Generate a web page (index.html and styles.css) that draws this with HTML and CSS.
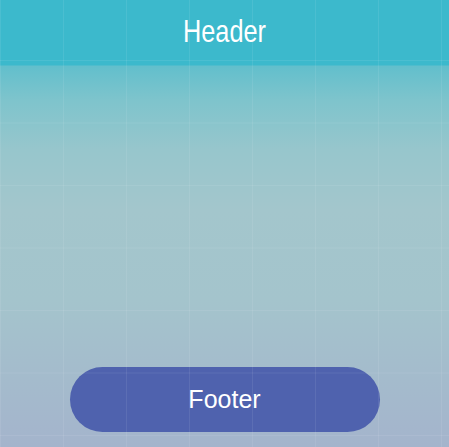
FILE: index.html
```html
<!DOCTYPE html>
<html lang="en">
<head>
<meta charset="utf-8">
<title>Layout</title>
<link rel="stylesheet" href="styles.css">
</head>
<body>
<div class="page">
  <header class="header"><span class="header-title">Header</span></header>
  <main class="content"></main>
  <footer class="footer">
    <button class="footer-btn" type="button">Footer</button>
  </footer>
</div>
<div class="grid-overlay"></div>
</body>
</html>
```
FILE: styles.css
```css
html, body {
  margin: 0;
  padding: 0;
  height: 100%;
}
body {
  font-family: "Liberation Sans", Arial, sans-serif;
  background: #a4b4cc;
}
.page {
  display: flex;
  flex-direction: column;
  height: 100vh;
  background: linear-gradient(to bottom, #3cb9cc 0px, #3cb9cc 65px, #62bfcc 66px, #7ec4cc 100px, #97c6cc 150px, #a3c6cc 210px, #a4c4cc 300px, #a4bccc 370px, #a4b4cc 447px);
}
.header {
  height: 65px;
  flex: none;
  display: flex;
  align-items: center;
  justify-content: center;
  background: #3cb9cc;
  color: #ffffff;
  padding-bottom: 3px;
  box-sizing: border-box;
}
.header-title {
  display: inline-block;
  font-family: "Liberation Sans", Arial, sans-serif;
  font-size: 32px;
  line-height: 1;
  transform: scaleX(0.79);
}
.content {
  flex: 1;
}
.footer {
  display: flex;
  justify-content: center;
  padding-bottom: 15px;
}
.footer-btn {
  width: 310px;
  height: 65px;
  border: none;
  border-radius: 33px;
  background: #4f62ae;
  color: #ffffff;
  font-family: "Liberation Sans", Arial, sans-serif;
  font-size: 25px;
  padding: 0;
}
.grid-overlay {
  position: fixed;
  inset: 0;
  pointer-events: none;
  background-image:
    linear-gradient(to right, rgba(255,255,255,0.08) 1px, transparent 1px),
    linear-gradient(to bottom, rgba(255,255,255,0.08) 1px, transparent 1px);
  background-size: 63px 62.5px;
  background-position: 0 -2.5px;
}
```
